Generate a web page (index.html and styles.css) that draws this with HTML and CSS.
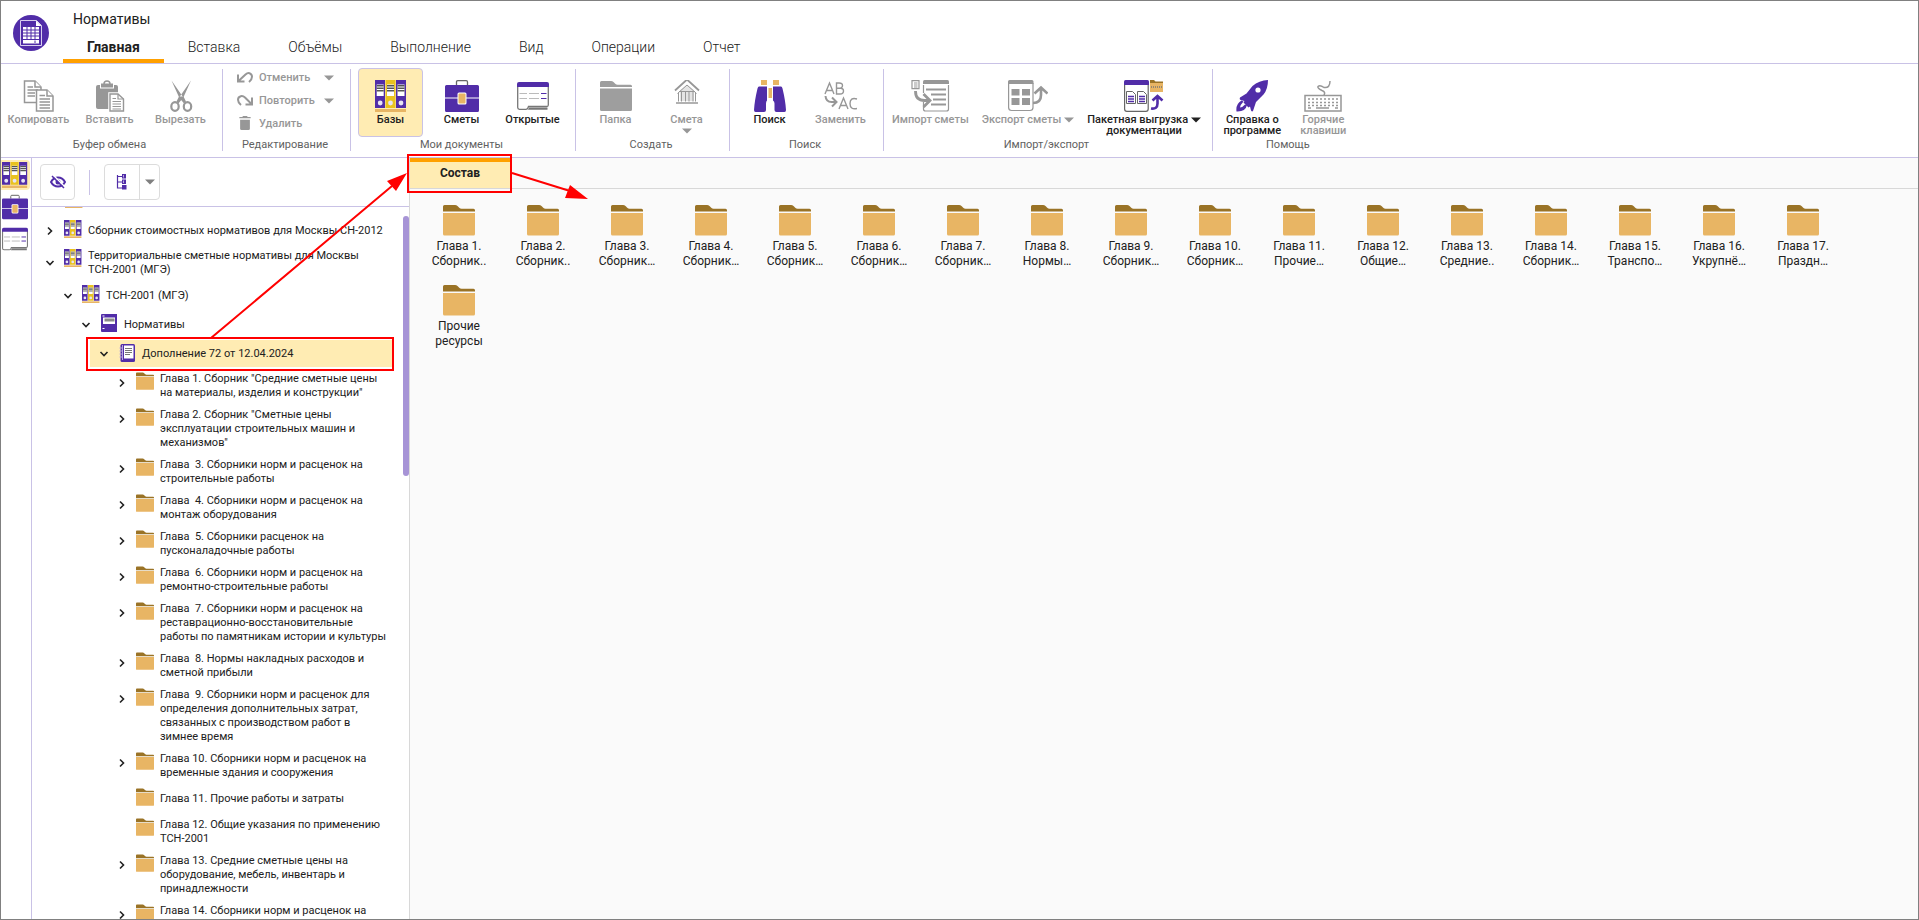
FILE: index.html
```html
<!DOCTYPE html>
<html lang="ru">
<head>
<meta charset="utf-8">
<title>Нормативы</title>
<link rel="stylesheet" href="styles.css">
</head>
<body>
<svg class="sprite" aria-hidden="true">
  <symbol id="i-folder" viewBox="0 0 32 32"><path fill="#9a7326" d="M0 7.500V2.500Q0 1 1.500 1H12q1.500 0 2.500 1l2 2q.8.800 2 .800h12q1.500 0 1.500 1.500v1.200z"/><path fill="#e8b564" d="M0 9h32v21q0 1.500-1.500 1.500h-29Q0 31.500 0 30z"/></symbol>
  <symbol id="i-folder-gray" viewBox="0 0 32 32"><path fill="#9e9e9e" d="M0 7V2.500Q0 1 1.500 1H11q1.500 0 2.500 1l2 2q.8.800 2 .800h13q1.500 0 1.500 1.500V7zM0 8.500h32v21q0 1.500-1.500 1.500h-29Q0 31 0 29.500z"/></symbol>
  <symbol id="i-binders" viewBox="0 0 32 32">
    <path fill="#512da8" d="M0 0h10v28H0zM21 0h10v28H21z"/><path fill="#e9c21f" d="M10.500 0h10v28h-10z"/>
    <path fill="#fff" d="M1.700 4.500h7V16h-7zM12 4.500h7V16h-7zM22.500 4.500h7V16h-7z"/>
    <path stroke="#555" stroke-width="1.500" d="M1.700 5.700h7m-7 2.500h7m-7 2.500h7M12 5.700h7m-7 2.500h7m-7 2.500h7m3.500-5h7m-7 2.500h7m-7 2.500h7"/>
    <g fill="#e8e4f4"><circle cx="5.200" cy="23" r="2.400"/><circle cx="15.500" cy="23" r="2.400"/><circle cx="26" cy="23" r="2.400"/></g>
    <path fill="#e8b564" d="M0 29h31v3H0z"/>
  </symbol>
  <symbol id="i-case" viewBox="0 0 34 32">
    <path fill="none" stroke="#666" stroke-width="1.300" d="M11.500 5V2q0-1.300 1.300-1.300h8.400q1.300 0 1.300 1.300v3"/>
    <path fill="#512da8" d="M1.500 5h31Q34 5 34 6.500V17.500H0V6.500Q0 5 1.500 5zM0 18.500h34v12q0 1.500-1.500 1.500h-31Q0 32 0 30.500z"/>
    <rect x="12.500" y="12.500" width="9" height="12" rx="1.500" fill="#fff"/><rect x="13.500" y="13.500" width="7" height="10" rx="1" fill="#e8b564"/>
  </symbol>
  <symbol id="i-open" viewBox="0 0 32 32">
    <path fill="#fff" stroke="#777" stroke-width="1.300" d="M.7 6v21.500q0 1.800 1.800 1.800H9q1.500 0 2-1.500l.5-1.300h18.300q1.500 0 1.500-1.500V6"/>
    <path fill="#777" d="M11 29.800l1-2.300h18.500v2.300z"/>
    <path fill="#512da8" d="M0 7V4q0-2 2-2h28q2 0 2 2v3z"/>
    <path fill="none" stroke="#bbb" stroke-width="1.200" d="M2.500 13.500H10m2 0h10m-19.500 5H10m2 0h10"/><path stroke="#512da8" stroke-width="1.200" d="M24 13.500h5.500m-5.500 5h5.500"/>
  </symbol>
  <symbol id="i-copy" viewBox="0 0 32 32"><g fill="#fff" stroke="#979797" stroke-width="1.500">
    <path d="M1.500 1H12l6 6v15.500H1.500z"/><path d="M12 1v6h6"/><path d="M4.500 7H10m-5.500 3H15M4.500 13H12m-7.500 3H12"/>
    <path stroke-width="1.500" d="M13.500 10H24l6 6v15H13.500z"/><path d="M24 10v6h6M16.500 15.500H22m-5.500 3.500h10.500M16.500 22h10.500M16.500 25h10.500M16.500 28h10.500"/></g></symbol>
  <symbol id="i-paste" viewBox="0 0 32 32"><path fill="#979797" d="M4 5h18q2 0 2 2v22H4q-2 0-2-2V7q0-2 2-2z"/><path fill="#fff" d="M6 4h14v4.500H6z"/><path fill="#979797" d="M7 3.500h12V7.500H7z"/><path fill="none" stroke="#979797" stroke-width="1.500" d="M10 4q0-3 3-3t3 3"/>
    <path fill="#fff" stroke="#fff" stroke-width="3.500" d="M16 14h8l5.500 5v12H16z"/><path fill="#fff" stroke="#979797" stroke-width="1.400" d="M16 14h8l5.500 5v12H16z"/><path fill="none" stroke="#979797" stroke-width="1.200" d="M24 14v5h5.500M18.500 18.500h3.500m-3.500 3H27m-8.500 2.500H27M18.500 26.500H27m-8.500 2.500H27"/></symbol>
  <symbol id="i-cut" viewBox="0 0 32 32"><path fill="#979797" d="M6.500.500L18 17l-2.500 3.500zM26 .500L14.500 17l2.500 3.500z"/><path fill="#979797" d="M14 16.500h4.500l2.500 5-2 2-2.800-3.500-2.700 3.500-2-2z"/><ellipse cx="10" cy="26.500" rx="3.700" ry="4.300" fill="none" stroke="#979797" stroke-width="2.200"/><ellipse cx="22.500" cy="26.500" rx="3.700" ry="4.300" fill="none" stroke="#979797" stroke-width="2.200"/></symbol>
  <symbol id="i-undo" viewBox="0 0 16 12"><path fill="none" stroke="#979797" stroke-width="2" d="M1 3v7h6.500M1.500 9.500L8.500 3q2-1.800 4-1.300 2.500.800 2.500 3.500T12 10.500"/></symbol>
  <symbol id="i-redo" viewBox="0 0 16 12"><path fill="none" stroke="#979797" stroke-width="2" d="M15 3v7H8.500M14.500 9.500L8 3Q6 1.200 3.800 1.700 1 2.500 1 5.200T4 10.500"/></symbol>
  <symbol id="i-trash" viewBox="0 0 12 16"><path fill="#979797" d="M0 1h3.500V0h5v1H12v1.500H0zM.8 4h10.400v9.500q0 1.500-1.500 1.500H2.300Q.8 15 .8 13.500z"/></symbol>
  <symbol id="i-house" viewBox="0 0 32 32"><path fill="#e4e4e4" d="M9 10l7-5 7 5v11H9z"/><g fill="none" stroke="#979797"><path stroke-width="1.800" d="M4 10.500L16 -.500l12 11"/><path d="M6.500 13.500L16 5l9.500 8.500M7.500 12.500v9M10.500 11.500v10M14.500 11v10.500M18 11v10.500M22 11.500v10M24.500 12.500v9M8 11.500h16"/><path stroke-width="1.500" d="M5 23h22"/></g></symbol>
  <symbol id="i-binoculars" viewBox="0 0 32 32"><path fill="#e8b564" d="M7 0h6v5H7zM19 0h6v5h-6zM14.500 8h3.500v10h-3.500z"/><path fill="#512da8" d="M5 6.500h8v14q-1 1-1 3V30q0 2-2 2H1.500Q0 32 0 30q.5-9 3.500-21.500Q4 6.500 5 6.500zM19 6.500h8q1 0 1.500 2Q31.500 21 32 30q0 2-1.500 2H22.500q-2 0-2-2v-6.500q0-2-1.500-3z"/></symbol>
  <symbol id="i-replace" viewBox="0 0 34 32"><g fill="none" stroke="#979797" stroke-width="1.400"><path d="M1 14L5.500 3 10 14M2.800 10.500h5.500M12.500 3v11H16q3.500 0 3.500-3T16 8.300h-3.500H15q3.500 0 3.500-2.700T15 3zM15 29l4.500-11L24 29M16.800 25.500h5.500M33 19q-7-2-7 4.500t7 5"/><path stroke-width="2" d="M1.500 16q.500 6 6 6h4M8 17.500l4.500 4.500L8 26.500"/></g></symbol>
  <symbol id="i-import" viewBox="0 0 38 32"><path fill="none" stroke="#979797" stroke-width="1.200" d="M1 .600h7v8H1zM3 3h3.500M3 5h3.500M3 7h3.500M12.500 5v8m0 9v7q0 2 2 2h21q2 0 2-2V5"/><path fill="#979797" d="M12 4V1.500Q12 0 13.500 0h23Q38 0 38 1.500V4z"/><path fill="none" stroke="#979797" stroke-width="1.800" d="M15 9.500h20M20 14.500h15M22 19.500h13M20 24.500h15"/><path fill="none" stroke="#979797" stroke-width="2.800" d="M4.500 11q0 9.500 9 9.500h5M12.500 14l6.500 6.500-6.500 6.500"/></symbol>
  <symbol id="i-export" viewBox="0 0 40 32"><path fill="none" stroke="#979797" stroke-width="1.200" d="M.6 3v24.500q0 3 3 3H22q3 0 3-3V3"/><path fill="#979797" d="M0 4V1.500Q0 0 1.500 0H24q1.500 0 1.500 1.500V4zM3.500 9h8v6.500h-8zM14 9h8v6.500h-8zM3.500 18h8v7h-8zM14 18h8v7h-8z"/><path fill="none" stroke="#979797" stroke-width="2.600" d="M25 23q8 0 8-8V9M26.500 13.500L33 7.500l6.500 6"/></symbol>
  <symbol id="i-batch" viewBox="0 0 40 32"><path fill="#fff" stroke="#666" stroke-width="1.200" d="M.6 3v26q0 2.300 2.300 2.300h19q2.300 0 2.300-2.300V3"/><path fill="#512da8" d="M0 5V1.500Q0 0 1.500 0h22Q25 0 25 1.500V5z"/><path fill="#fff" stroke="#666" d="M2.500 11.500h6l3 3v9h-9zM13.500 11.500h6l3 3v9h-9z"/><path stroke="#512da8" stroke-width="1.300" d="M4 16.500h6M4 19h6M4 21.500h6m5-5h6m-6 2.500h6m-6 2.500h6"/><path fill="#9a7326" d="M26 0h4l1.500 1.500H39V4H26z"/><path fill="#e8b564" d="M26 3h13v9H26z"/><path stroke="#777" stroke-width="1.500" stroke-dasharray="1 1" d="M27 7h11"/><path fill="none" stroke="#512da8" stroke-width="2.600" d="M27 28.500q6.500 1 6.500-5V17M28.500 20.500l5-4.500 5 4.500"/></symbol>
  <symbol id="i-rocket" viewBox="0 0 32 32"><path fill="#512da8" d="M32 0q0 9-4.500 14.500L20 22l-3 9q-1 1-2-.5l-1-4-1.500 1-5-5 1-1.500-4-1q-1.500-1-.5-2.500l6.500-4 6-7.500Q23 .500 32 0z"/><circle cx="22" cy="10" r="2.600" fill="#fff"/><path fill="#512da8" d="M5.500 20.500l2 1q-3 3-3.500 6 3-.500 5-3l2 .500Q9.500 32 .500 31.500-.500 24 5.500 20.500z"/></symbol>
  <symbol id="i-keyboard" viewBox="0 0 38 32"><path fill="none" stroke="#979797" stroke-width="1.500" d="M1 15.500h36V31H1zM20 15q2-3-2-4.500-5-2.500-4-4 2-2 6 1 6 1 6-6.500"/><path stroke="#979797" stroke-width="1.500" stroke-dasharray="2 2" d="M4 19h31M4 22.500h31M4 25.500h31"/><path stroke="#979797" stroke-width="1.500" d="M4 28h3m5 0h13m6 0h3"/></symbol>
  <symbol id="i-book" viewBox="0 0 16 18"><path fill="#512da8" d="M1 0h15v18H1q-1 0-1-1V1q0-1 1-1z"/><path fill="#fff" d="M2 3.500h12V10H2zM1.500 1.500h2v1h-2zM1.500 14h2v1h-2z"/><path fill="#8a8a8a" d="M3.500 4.500h10v3h-10z"/></symbol>
  <symbol id="i-journal" viewBox="0 0 16 18"><rect x="1.500" y="0" width="14.500" height="18" rx="1.500" fill="#512da8"/><path fill="#fff" d="M5 1.500h9.500v13H5z"/><path stroke="#777" d="M6 4.500h7m-7 2h7m-7 2h7m-7 2h5"/><path stroke="#b9a9dc" d="M3.500 1v15M.5 4h3m-3 3h3m-3 3h3m-3 3h3"/></symbol>
  <symbol id="i-caret" viewBox="0 0 10 6"><path fill="currentColor" d="M0 .500h10L5 5.500z"/></symbol>
  <symbol id="i-right" viewBox="0 0 10 10"><path fill="none" stroke="#222" stroke-width="1.600" d="M3 1.500L6.500 5 3 8.500"/></symbol>
  <symbol id="i-down" viewBox="0 0 10 10"><path fill="none" stroke="#222" stroke-width="1.600" d="M1.500 3L5 6.500 8.500 3"/></symbol>
</svg>

<div class="app">
  <header class="top">
    <svg class="logo" viewBox="0 0 36 36" aria-hidden="true"><circle cx="18" cy="18" r="18" fill="#512da8"/><path fill="none" stroke="#d8cfee" d="M7.500 5.500h16l5 5v20h-21z"/><path fill="#fff" d="M23 5.500l5.500 5.500H23zM10 12h16v16.500H10z"/><path fill="none" stroke="#512da8" d="M10 15h16m-16 3h16m-16 3h16m-16 3.500h16M14 12v12.500M18 12v12.500M22 12v12.500m0 1v2.500"/></svg>
    <div class="top-main">
      <h1>Нормативы</h1>
      <nav class="tabs">
        <button class="tab active">Главная</button><button class="tab">Вставка</button><button class="tab">Объёмы</button><button class="tab">Выполнение</button><button class="tab">Вид</button><button class="tab">Операции</button><button class="tab">Отчет</button>
      </nav>
    </div>
  </header>

  <div class="ribbon">
    <section class="group"><div class="tools">
      <button class="tool" disabled><svg><use href="#i-copy"/></svg><span>Копировать</span></button>
      <button class="tool" disabled><svg><use href="#i-paste"/></svg><span>Вставить</span></button>
      <button class="tool" disabled><svg><use href="#i-cut"/></svg><span>Вырезать</span></button>
    </div><h2>Буфер обмена</h2></section>
    <section class="group"><div class="rows">
      <button class="row-tool" disabled><svg><use href="#i-undo"/></svg><span>Отменить</span><svg class="caret"><use href="#i-caret"/></svg></button>
      <button class="row-tool" disabled><svg><use href="#i-redo"/></svg><span>Повторить</span><svg class="caret"><use href="#i-caret"/></svg></button>
      <button class="row-tool" disabled><svg><use href="#i-trash"/></svg><span>Удалить</span></button>
    </div><h2>Редактирование</h2></section>
    <section class="group"><div class="tools">
      <button class="tool selected"><svg><use href="#i-binders"/></svg><span>Базы</span></button>
      <button class="tool"><svg class="wide"><use href="#i-case"/></svg><span>Сметы</span></button>
      <button class="tool"><svg><use href="#i-open"/></svg><span>Открытые</span></button>
    </div><h2>Мои документы</h2></section>
    <section class="group"><div class="tools">
      <button class="tool" disabled><svg><use href="#i-folder-gray"/></svg><span>Папка</span></button>
      <button class="tool" disabled><svg class="house"><use href="#i-house"/></svg><span>Смета</span><svg class="caret"><use href="#i-caret"/></svg></button>
    </div><h2>Создать</h2></section>
    <section class="group"><div class="tools">
      <button class="tool"><svg><use href="#i-binoculars"/></svg><span>Поиск</span></button>
      <button class="tool" disabled><svg class="wide"><use href="#i-replace"/></svg><span>Заменить</span></button>
    </div><h2>Поиск</h2></section>
    <section class="group"><div class="tools loose">
      <button class="tool" disabled><svg class="wider"><use href="#i-import"/></svg><span>Импорт сметы</span></button>
      <button class="tool" disabled><svg class="wider"><use href="#i-export"/></svg><span>Экспорт сметы <svg class="caret"><use href="#i-caret"/></svg></span></button>
      <button class="tool"><svg class="wider"><use href="#i-batch"/></svg><span>Пакетная выгрузка <svg class="caret"><use href="#i-caret"/></svg><br>документации</span></button>
    </div><h2>Импорт/экспорт</h2></section>
    <section class="group"><div class="tools">
      <button class="tool"><svg><use href="#i-rocket"/></svg><span>Справка о<br>программе</span></button>
      <button class="tool" disabled><svg class="wider"><use href="#i-keyboard"/></svg><span>Горячие<br>клавиши</span></button>
    </div><h2>Помощь</h2></section>
  </div>

  <div class="work">
    <nav class="rail">
      <button class="selected" aria-label="Базы"><svg><use href="#i-binders"/></svg></button>
      <button aria-label="Сметы"><svg><use href="#i-case"/></svg></button>
      <button aria-label="Открытые"><svg><use href="#i-open"/></svg></button>
    </nav>

    <aside class="side">
      <div class="side-bar">
        <button class="box" aria-label="Скрыть"><svg class="eye" viewBox="0 0 16 14"><path fill="none" stroke="#512da8" stroke-width="2" d="M1 7q2.500-4.500 7-4.500T15 7q-2.500 4.500-7 4.500T1 7z"/><circle cx="8" cy="7" r="2.500" fill="#512da8"/><path stroke="#fff" stroke-width="1.500" d="M3 0l12 12"/><path stroke="#512da8" stroke-width="1.500" d="M2 1l12 12"/></svg></button>
        <i class="bar"></i>
        <div class="split">
          <button aria-label="Дерево"><svg class="hier" viewBox="0 0 12 16"><path fill="none" stroke="#512da8" stroke-width="1.200" d="M1.500 1v13H7M1.500 2.500H7M1.500 8H7"/><path fill="#512da8" d="M6 0h4v4.500H6zM6 5.500h4V10H6zM6 11h4.500v4.500H6z"/><path stroke="#b9a9dc" d="M7.500 1v2.500M7.500 6.500V9"/></svg></button>
          <button aria-label="Ещё"><svg class="caret"><use href="#i-caret"/></svg></button>
        </div>
      </div>
      <div class="tree-wrap">
        <ul class="tree">
          <li class="cut"><svg class="icon"><use href="#i-binders"/></svg></li>
          <li class="top-level"><button aria-label="Развернуть"><svg><use href="#i-right"/></svg></button><svg class="icon"><use href="#i-binders"/></svg><span>Сборник стоимостных нормативов для Москвы СН-2012</span></li>
          <li class="top-level"><button aria-label="Свернуть"><svg><use href="#i-down"/></svg></button><svg class="icon"><use href="#i-binders"/></svg><span>Территориальные сметные нормативы для Москвы ТСН-2001 (МГЭ)</span></li>
          <li class="top-level l1"><button aria-label="Свернуть"><svg><use href="#i-down"/></svg></button><svg class="icon"><use href="#i-binders"/></svg><span>ТСН-2001 (МГЭ)</span></li>
          <li class="top-level l2"><button aria-label="Свернуть"><svg><use href="#i-down"/></svg></button><svg class="icon"><use href="#i-book"/></svg><span>Нормативы</span></li>
          <li class="top-level l3 current"><button aria-label="Свернуть"><svg><use href="#i-down"/></svg></button><svg class="icon"><use href="#i-journal"/></svg><span>Дополнение 72 от 12.04.2024</span></li>
          <li class="l4"><button aria-label="Развернуть"><svg><use href="#i-right"/></svg></button><svg class="icon"><use href="#i-folder"/></svg><span>Глава 1. Сборник "Средние сметные цены на материалы, изделия и конструкции"</span></li>
          <li class="l4"><button aria-label="Развернуть"><svg><use href="#i-right"/></svg></button><svg class="icon"><use href="#i-folder"/></svg><span>Глава 2. Сборник "Сметные цены эксплуатации строительных машин и механизмов"</span></li>
          <li class="l4"><button aria-label="Развернуть"><svg><use href="#i-right"/></svg></button><svg class="icon"><use href="#i-folder"/></svg><span>Глава  3. Сборники норм и расценок на строительные работы</span></li>
          <li class="l4"><button aria-label="Развернуть"><svg><use href="#i-right"/></svg></button><svg class="icon"><use href="#i-folder"/></svg><span>Глава  4. Сборники норм и расценок на монтаж оборудования</span></li>
          <li class="l4"><button aria-label="Развернуть"><svg><use href="#i-right"/></svg></button><svg class="icon"><use href="#i-folder"/></svg><span>Глава  5. Сборники расценок на пусконаладочные работы</span></li>
          <li class="l4"><button aria-label="Развернуть"><svg><use href="#i-right"/></svg></button><svg class="icon"><use href="#i-folder"/></svg><span>Глава  6. Сборники норм и расценок на ремонтно-строительные работы</span></li>
          <li class="l4"><button aria-label="Развернуть"><svg><use href="#i-right"/></svg></button><svg class="icon"><use href="#i-folder"/></svg><span>Глава  7. Сборники норм и расценок на реставрационно-восстановительные работы по памятникам истории и культуры</span></li>
          <li class="l4"><button aria-label="Развернуть"><svg><use href="#i-right"/></svg></button><svg class="icon"><use href="#i-folder"/></svg><span>Глава  8. Нормы накладных расходов и сметной прибыли</span></li>
          <li class="l4"><button aria-label="Развернуть"><svg><use href="#i-right"/></svg></button><svg class="icon"><use href="#i-folder"/></svg><span>Глава  9. Сборники норм и расценок для определения дополнительных затрат, связанных с производством работ в зимнее время</span></li>
          <li class="l4"><button aria-label="Развернуть"><svg><use href="#i-right"/></svg></button><svg class="icon"><use href="#i-folder"/></svg><span>Глава 10. Сборники норм и расценок на временные здания и сооружения</span></li>
          <li class="l4 leaf"><svg class="icon"><use href="#i-folder"/></svg><span>Глава 11. Прочие работы и затраты</span></li>
          <li class="l4 leaf"><svg class="icon"><use href="#i-folder"/></svg><span>Глава 12. Общие указания по применению ТСН-2001</span></li>
          <li class="l4"><button aria-label="Развернуть"><svg><use href="#i-right"/></svg></button><svg class="icon"><use href="#i-folder"/></svg><span>Глава 13. Средние сметные цены на оборудование, мебель, инвентарь и принадлежности</span></li>
          <li class="l4"><button aria-label="Развернуть"><svg><use href="#i-right"/></svg></button><svg class="icon"><use href="#i-folder"/></svg><span>Глава 14. Сборники норм и расценок на</span></li>
        </ul>
        <div class="scroll"><i></i></div>
      </div>
    </aside>

    <main class="content">
      <div class="strip"><button class="strip-tab">Состав</button></div>
      <div class="cards">
        <button class="card"><svg><use href="#i-folder"/></svg><span>Глава 1.<br>Сборник..</span></button>
        <button class="card"><svg><use href="#i-folder"/></svg><span>Глава 2.<br>Сборник..</span></button>
        <button class="card"><svg><use href="#i-folder"/></svg><span>Глава 3.<br>Сборник…</span></button>
        <button class="card"><svg><use href="#i-folder"/></svg><span>Глава 4.<br>Сборник…</span></button>
        <button class="card"><svg><use href="#i-folder"/></svg><span>Глава 5.<br>Сборник…</span></button>
        <button class="card"><svg><use href="#i-folder"/></svg><span>Глава 6.<br>Сборник…</span></button>
        <button class="card"><svg><use href="#i-folder"/></svg><span>Глава 7.<br>Сборник…</span></button>
        <button class="card"><svg><use href="#i-folder"/></svg><span>Глава 8.<br>Нормы…</span></button>
        <button class="card"><svg><use href="#i-folder"/></svg><span>Глава 9.<br>Сборник…</span></button>
        <button class="card"><svg><use href="#i-folder"/></svg><span>Глава 10.<br>Сборник…</span></button>
        <button class="card"><svg><use href="#i-folder"/></svg><span>Глава 11.<br>Прочие…</span></button>
        <button class="card"><svg><use href="#i-folder"/></svg><span>Глава 12.<br>Общие…</span></button>
        <button class="card"><svg><use href="#i-folder"/></svg><span>Глава 13.<br>Средние..</span></button>
        <button class="card"><svg><use href="#i-folder"/></svg><span>Глава 14.<br>Сборник…</span></button>
        <button class="card"><svg><use href="#i-folder"/></svg><span>Глава 15.<br>Транспо…</span></button>
        <button class="card"><svg><use href="#i-folder"/></svg><span>Глава 16.<br>Укрупнё…</span></button>
        <button class="card"><svg><use href="#i-folder"/></svg><span>Глава 17.<br>Праздн…</span></button>
        <button class="card"><svg><use href="#i-folder"/></svg><span>Прочие<br>ресурсы</span></button>
      </div>
    </main>
  </div>

  <svg class="marks" aria-hidden="true">
    <g fill="none" stroke="#f00" stroke-width="2"><path d="M87 338h306v32H87zM408 155h103v37H408z"/><path d="M211 338L392 186M512 173l58 18"/></g>
    <path fill="#f00" d="M407 173l-11 18-9-10zM588 199l-23-1 5-13z"/>
  </svg>
</div>
</body>
</html>
```

FILE: styles.css
```css
* { box-sizing: border-box; }
body { margin: 0; font-family: Roboto, "Noto Sans", sans-serif; font-size: 12px; color: #212121; }
button { margin: 0; padding: 0; border: 0; background: none; font: inherit; color: inherit; cursor: pointer; }
button:disabled { color: #979797; cursor: default; }
h1, h2, ul { margin: 0; padding: 0; font-weight: 400; }
svg { flex: none; }
.sprite { position: absolute; width: 0; height: 0; }
.app { position: relative; display: flex; flex-direction: column; height: 100vh; border: 1px solid #808080; overflow: hidden; background: #fff; }
.caret { width: 10px; height: 6px; }

.top { display: flex; border-bottom: 1px solid #c9c2e6; }
.logo { width: 36px; height: 36px; margin: 14px 0 0 12px; }
.top-main { display: flex; flex-direction: column; padding-left: 14px; }
h1 { padding: 8px 0 0 10px; font-size: 14px; line-height: 20px; }
.tabs { display: flex; }
.tab { padding: 10px 24px 3px; border-bottom: 4px solid transparent; font-size: 14px; font-weight: 300; line-height: 17px; }
.tab.active { border-color: #ffa000; font-weight: 700; }

.ribbon { display: flex; padding: 5px 0 6px; border-bottom: 1px solid #c9c2e6; }
.group { display: flex; flex-direction: column; justify-content: space-between; height: 82px; padding: 0 10px 0 7px; border-right: 1px solid #c9c2e6; }
.group:first-child { padding: 0 9px 0 5px; }
.group:last-child { border: 0; }
.group h2 { font-size: 11px; line-height: 12px; text-align: center; color: #616161; }
.tools { display: flex; gap: 6px; margin-top: -1px; }
.tools.loose { gap: 11px; }
.tool { display: flex; flex-direction: column; align-items: center; min-width: 65px; height: 69px; padding: 11px 0 0; border: 1px solid transparent; border-radius: 4px; font-size: 11px; font-weight: 500; line-height: 11px; }
.tool > svg { width: 32px; height: 32px; margin-bottom: 2px; }
.tool > svg.wide { width: 34px; }
.tool > svg.wider { width: 40px; }
.tool > svg.house { overflow: visible; }
.tool > svg.caret { width: 10px; height: 6px; margin: 3px 0 0; }
.tool.selected { background: #ffecb3; border-color: #c9c2e6; }
.rows { display: flex; flex-direction: column; margin-top: -3px; padding: 0 6px 0 7px; }
.row-tool { display: grid; grid-template-columns: 16px 59px 10px; gap: 6px; align-items: center; height: 23px; font-size: 11px; font-weight: 500; text-align: left; }
.row-tool svg { width: 16px; height: 15px; }
.row-tool svg.caret { width: 10px; height: 6px; }

.work { display: flex; flex: 1; min-height: 0; }
.rail { display: flex; flex-direction: column; gap: 2px; width: 31px; border-right: 1px solid #c9c2e6; padding-top: 2px; }
.rail button { display: flex; width: 29px; height: 30px; padding-left: 1px; align-items: center; border-radius: 0 4px 4px 0; }
.rail .selected { background: #ffecb3; }
.rail svg { width: 26px; height: 26px; }

.side { display: flex; flex-direction: column; width: 378px; border-right: 1px solid #d8d8d8; }
.side-bar { display: flex; align-items: center; height: 49px; padding: 0 8px; border-bottom: 1px solid #c9c2e6; }
.box, .split { display: flex; align-items: center; justify-content: center; height: 36px; border: 1px solid #dcdcdc; border-radius: 4px; }
.box { width: 35px; }
.bar { width: 1px; height: 25px; margin: 0 14px; background: #c9c2e6; }
.split button { display: flex; align-items: center; justify-content: center; width: 34px; height: 34px; }
.split button + button { width: 20px; border-left: 1px solid #dcdcdc; color: #808080; }
.eye { width: 16px; height: 14px; }
.hier { width: 12px; height: 16px; }
.tree-wrap { display: flex; flex: 1; min-height: 0; overflow: hidden; }
.tree { flex: 1; list-style: none; font-size: 11px; line-height: 14px; }
.tree li { display: flex; min-height: 30px; padding: 4px 0; margin-right: 16px; padding-left: 12px; }
.tree li.top-level { min-height: 29px; align-items: center; }
.tree li.cut { min-height: 0; height: 9px; padding: 0 0 8px 33px; align-items: flex-end; overflow: hidden; }
.tree li.l1 { padding-left: 30px; }
.tree li.l2 { padding-left: 48px; }
.tree li.l3 { padding-left: 8px; margin-left: 58px; }
.tree li.l4 { padding-left: 84px; }
.tree li.leaf { padding-left: 104px; }
.tree li.current { min-height: 27px; margin-top: 1px; margin-right: 10px; margin-bottom: 1px; background: #ffecb3; }
.tree button { display: flex; flex: none; justify-content: center; width: 12px; margin-right: 8px; }
.tree .l4 button { align-items: flex-start; padding-top: 6px; }
.tree button svg { width: 10px; height: 10px; }
.tree .icon { align-self: flex-start; width: 18px; height: 18px; margin-right: 6px; }
.tree .cut .icon { align-self: flex-end; }
.tree span { white-space: pre-wrap; min-width: 0; }
.tree .leaf span { align-self: center; }
.scroll { width: 6px; padding-top: 9px; }
.scroll i { display: block; height: 260px; border-radius: 3px; background: #a794d6; }

.content { flex: 1; min-width: 0; background: #fafafa; }
.strip { display: flex; height: 31px; border-bottom: 1px solid #d8d8d8; }
.strip-tab { width: 100px; padding-bottom: 5px; border-top: 4px solid #ffa000; background: #ffecb3; font-weight: 700; }
.cards { display: grid; grid-template-columns: repeat(auto-fill, 84px); padding: 15px 7px; }
.card { display: flex; flex-direction: column; align-items: center; gap: 3px; height: 80px; line-height: 15px; text-align: center; }
.card svg { width: 32px; height: 32px; }

.marks { position: absolute; top: -1px; left: -1px; width: 600px; height: 400px; pointer-events: none; }
```
